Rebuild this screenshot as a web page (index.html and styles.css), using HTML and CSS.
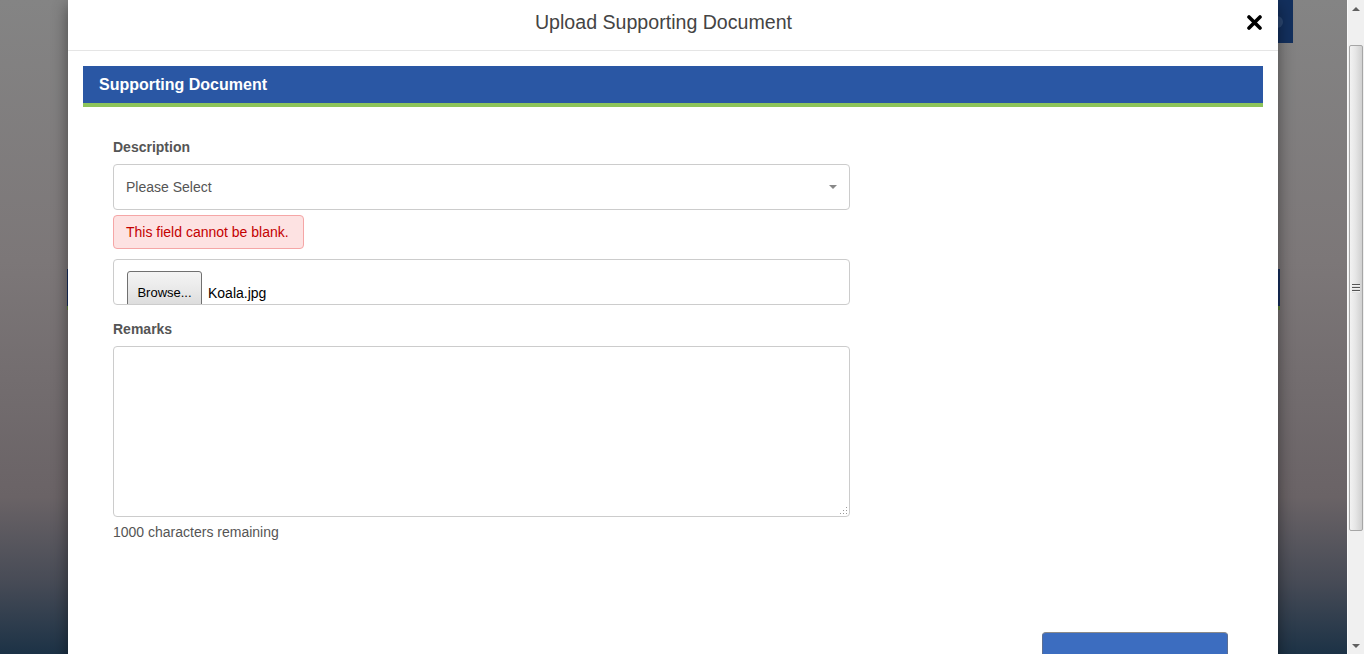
FILE: index.html
```html
<!DOCTYPE html>
<html lang="en">
<head>
<meta charset="utf-8">
<title>Upload Supporting Document</title>
<link rel="stylesheet" href="styles.css">
</head>
<body>
<div class="viewport">
  <div class="page">
    <div class="page-top">
      <div class="top-nav"><span class="avatar"></span></div>
    </div>
    <div class="page-band"></div>

    <div class="modal">
      <div class="modal-header">
        <h4 class="modal-title">Upload Supporting Document</h4>
        <button class="close" type="button" aria-label="Close">
          <svg width="15" height="15" viewBox="0 0 15 15"><path d="M2 2 L13 13 M13 2 L2 13" stroke="#000" stroke-width="3.6" stroke-linecap="round"/></svg>
        </button>
      </div>
      <div class="modal-body">
        <div class="panel-heading">Supporting Document</div>
        <div class="panel-body">
          <div class="form">
            <label class="field-label">Description</label>
            <div class="select">
              <span>Please Select</span>
              <span class="caret"></span>
            </div>
            <div class="error">This field cannot be blank.</div>
            <div class="file-box">
              <span class="browse">Browse...</span>
              <span class="file-name">Koala.jpg</span>
            </div>
            <label class="field-label remarks-label">Remarks</label>
            <div class="textarea-wrap">
              <textarea class="textarea"></textarea>
              <svg class="grip" width="9" height="9" viewBox="0 0 9 9">
                <rect x="7" y="1" width="1" height="1" fill="#999"/>
                <rect x="4" y="4" width="1" height="1" fill="#999"/>
                <rect x="7" y="4" width="1" height="1" fill="#999"/>
                <rect x="1" y="7" width="1" height="1" fill="#999"/>
                <rect x="4" y="7" width="1" height="1" fill="#999"/>
                <rect x="7" y="7" width="1" height="1" fill="#999"/>
              </svg>
            </div>
            <div class="counter">1000 characters remaining</div>
          </div>
          <div class="footer">
            <button class="primary" type="button"></button>
          </div>
        </div>
      </div>
    </div>
  </div>
  <div class="scrollbar">
    <div class="sb-btn"><span class="tri-up"></span></div>
    <div class="sb-track">
      <div class="sb-thumb">
        <span class="sb-grip"></span>
      </div>
    </div>
    <div class="sb-btn"><span class="tri-down"></span></div>
  </div>
</div>
</body>
</html>
```
FILE: styles.css
```css
* { box-sizing: border-box; }
html, body { margin: 0; padding: 0; height: 100%; overflow: hidden; }
body { font-family: "Liberation Sans", Arial, sans-serif; font-size: 14px; color: #555; }

.viewport { display: flex; width: 1364px; height: 654px; }

.page {
  position: relative;
  flex: 1;
  overflow: hidden;
  background: linear-gradient(to bottom, #848484 0%, #7c7778 40%, #6a6366 76%, #474b56 89%, #1c3246 100%);
}

.page-top { display: flex; justify-content: flex-end; padding-right: 54px; }
.top-nav {
  width: 300px; height: 43px; background: #13305e;
  display: flex; align-items: center; justify-content: flex-end; padding-right: 10px;
}
.avatar { width: 12px; height: 12px; border-radius: 50%; background: #2c4873; }

.page-band {
  margin: 226px 67px 0 67px;
  height: 41px;
  background: #172f5e;
  border-bottom: 4px solid #5d7d3a;
}

.modal {
  position: absolute;
  left: 68px; top: 0;
  width: 1210px; height: 720px;
  background: #fff;
  box-shadow: 0 5px 15px rgba(0,0,0,.45);
}

.modal-header {
  display: flex;
  align-items: flex-start;
  height: 51px;
  padding: 9px 14px 0 15px;
  border-bottom: 1px solid #e5e5e5;
}
.modal-title {
  flex: 1; margin: 0;
  text-align: center;
  font-size: 19.6px; line-height: 27px; font-weight: normal;
  color: #444;
}
.close {
  width: 20px; height: 27px; padding: 0; margin: 0;
  border: 0; background: none;
  display: flex; align-items: center; justify-content: center;
}

.modal-body { padding: 15px; }

.panel-heading {
  height: 41px;
  background: #2a57a4;
  border-bottom: 4px solid #8dc45a;
  color: #fff;
  font-weight: bold; font-size: 16px; line-height: 37px;
  padding-left: 16px;
}

.panel-body { padding: 30px 0 0 30px; }

.form { width: 737px; display: flex; flex-direction: column; align-items: stretch; }

.field-label { display: block; font-weight: bold; font-size: 14px; line-height: 20px; color: #555; margin-bottom: 7px; }
.remarks-label { margin-top: 14px; }

.select {
  height: 46px;
  border: 1px solid #ccc; border-radius: 4px;
  padding: 0 11px 0 12px;
  display: flex; align-items: center; justify-content: space-between;
  color: #555; font-size: 14px;
}
.caret {
  width: 0; height: 0;
  border-left: 4px solid transparent; border-right: 4px solid transparent;
  border-top: 4px solid #888;
  margin-right: 1px;
}

.error {
  align-self: flex-start;
  margin-top: 5px;
  height: 34px;
  padding: 0 14px 0 12px;
  background: #fde2e2;
  border: 1px solid #f5a6a6; border-radius: 4px;
  color: #c40000; font-size: 14px; line-height: 32px;
}

.file-box {
  margin-top: 10px;
  height: 46px;
  border: 1px solid #ccc; border-radius: 4px;
  overflow: hidden;
  padding: 11px 0 0 13px;
  display: flex; align-items: flex-start;
}
.browse {
  flex: none;
  width: 75px; height: 40px;
  border: 1px solid #707070; border-radius: 3px;
  background: linear-gradient(to bottom, #f4f4f4 0%, #e8e8e8 50%, #d8d8d8 100%);
  color: #000; font-size: 13px; line-height: 20px;
  padding-top: 11px; text-align: center;
}
.file-name { margin-left: 6px; padding-top: 12px; line-height: 20px; font-size: 14px; color: #000; }

.textarea-wrap { position: relative; height: 171px; }
.textarea {
  display: block; width: 100%; height: 100%;
  border: 1px solid #ccc; border-radius: 4px;
  resize: none; outline: none; margin: 0;
  font-family: inherit;
}
.grip { position: absolute; right: 2px; bottom: 2px; }

.counter { margin-top: 5px; line-height: 20px; font-size: 14px; color: #555; }

.footer { display: flex; justify-content: flex-end; padding-right: 35px; margin-top: 90px; }
.primary {
  width: 186px; height: 42px;
  background: #3c6dc0;
  border: 1px solid #5c6f94; border-top-color: #8a8a8a;
  border-radius: 4px;
}

.scrollbar {
  width: 17px; height: 654px;
  background: #f0f0f0;
  border-left: 1px solid #fafafa;
  display: flex; flex-direction: column;
}
.sb-btn { height: 17px; display: flex; align-items: center; justify-content: center; }
.tri-up { width: 0; height: 0; border-left: 4px solid transparent; border-right: 4px solid transparent; border-bottom: 4px solid #606060; }
.tri-down { width: 0; height: 0; border-left: 4px solid transparent; border-right: 4px solid transparent; border-top: 4px solid #606060; }
.sb-track { flex: 1; padding: 28px 1px 0 1px; }
.sb-thumb {
  height: 486px;
  border: 1px solid #a6a6a6; border-radius: 2px;
  background: linear-gradient(to right, #f2f2f2 0%, #e6e6e6 45%, #d0d0d0 100%);
  display: flex; align-items: center; justify-content: center;
}
.sb-grip {
  width: 8px; height: 9px;
  background: repeating-linear-gradient(to bottom, #555 0 1px, #f0f0f0 1px 2px, #e0e0e0 2px 3px);
}
```
